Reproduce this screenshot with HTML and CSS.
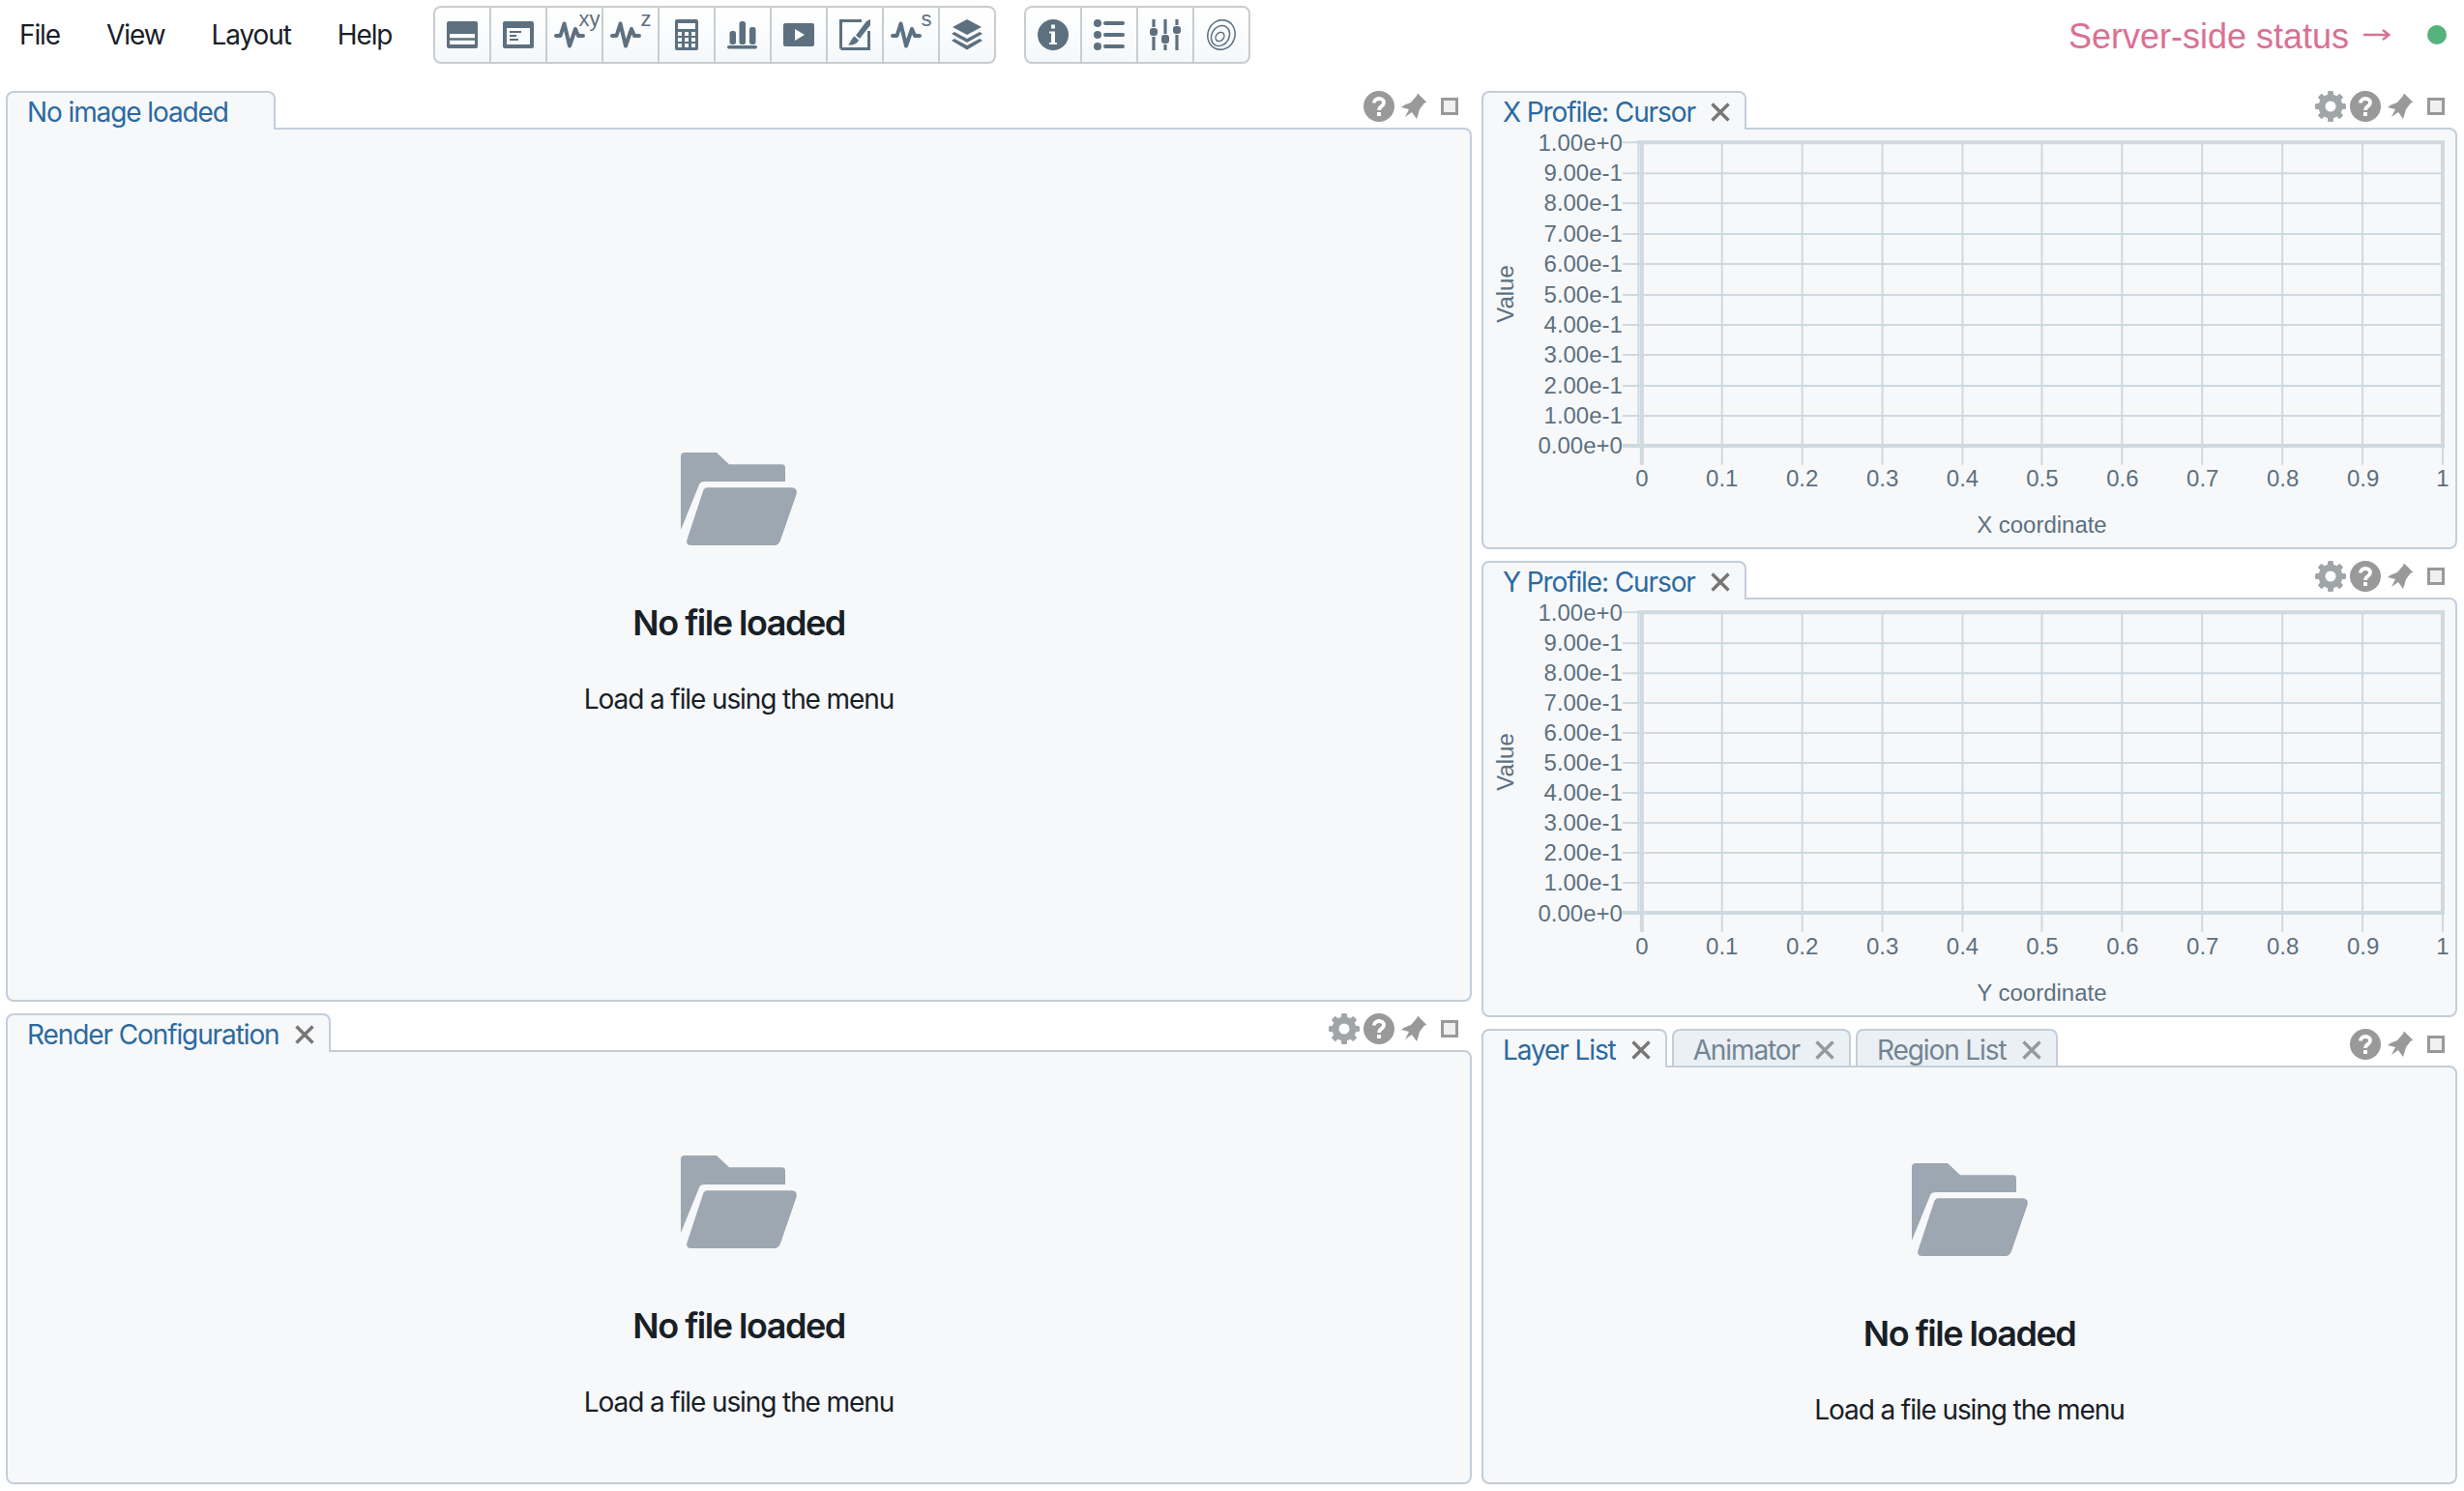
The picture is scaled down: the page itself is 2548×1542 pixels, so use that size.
FILE: index.html
```html
<!DOCTYPE html>
<html lang="en">
<head>
<meta charset="utf-8">
<title>CARTA</title>
<link rel="stylesheet" href="styles.css">
</head>
<body>
<svg class="defs" width="0" height="0" aria-hidden="true">
  <symbol id="folder" viewBox="0 0 120 96">
    <path d="M0 4Q0 0 4 0H37L50 12.3H104.6Q108 12.3 108 16V30H24.5Q21 30 19.5 32L0 80Z"/>
    <path d="M27 36.3H114Q121 36.3 119.6 43L103 91Q101 96 97 96H11Q5 96 6.5 90L23 40Q24.5 36.3 27 36.3Z"/>
  </symbol>
  <symbol id="gear" viewBox="0 0 32 32">
    <g>
      <rect x="13" y="0" width="6" height="7" rx="1.5"/>
      <rect x="13" y="0" width="6" height="7" rx="1.5" transform="rotate(45 16 16)"/>
      <rect x="13" y="0" width="6" height="7" rx="1.5" transform="rotate(90 16 16)"/>
      <rect x="13" y="0" width="6" height="7" rx="1.5" transform="rotate(135 16 16)"/>
      <rect x="13" y="0" width="6" height="7" rx="1.5" transform="rotate(180 16 16)"/>
      <rect x="13" y="0" width="6" height="7" rx="1.5" transform="rotate(225 16 16)"/>
      <rect x="13" y="0" width="6" height="7" rx="1.5" transform="rotate(270 16 16)"/>
      <rect x="13" y="0" width="6" height="7" rx="1.5" transform="rotate(315 16 16)"/>
    </g>
    <circle cx="16" cy="16" r="9" fill="none" stroke="currentColor" stroke-width="7"/>
  </symbol>
  <symbol id="help" viewBox="0 0 32 32">
    <circle cx="16" cy="16" r="16"/>
    <path d="M11 12.5C11 9.5 13.300 8 16 8s5 1.500 5 4.300c0 3.700-5 3.500-5 7.700" fill="none" stroke="#fff" stroke-width="3.800"/>
    <rect x="14" y="22" width="4" height="4" fill="#fff"/>
  </symbol>
  <symbol id="pin" viewBox="0 0 28 28">
    <path d="M18 .5L27.500 10 25 10.500 20 17 18 24 17 27 12 20 5 25 9 17 1 15 4.500 12.500 11 10 17 3Z"/>
  </symbol>
  <symbol id="close" viewBox="0 0 20 20">
    <path d="M1.500 1.500L18.500 18.500M18.500 1.500L1.500 18.500" fill="none" stroke="currentColor" stroke-width="3.400"/>
  </symbol>
  <symbol id="pulse" viewBox="0 0 32 28">
    <path d="M2 15H6.500L10.500 2.500 16 25.500 22 8 25 15H30" fill="none" stroke="currentColor" stroke-width="4" stroke-linecap="round" stroke-linejoin="round"/>
  </symbol>
</svg>

<div class="app">
  <header class="topbar">
    <nav class="menu">
      <span class="menu-item">File</span>
      <span class="menu-item">View</span>
      <span class="menu-item">Layout</span>
      <span class="menu-item">Help</span>
    </nav>
    <div class="btn-group first-group">
      <div class="tool"><svg class="ico" viewBox="0 0 32 32"><path fill-rule="evenodd" d="M2 2H30Q32 2 32 4V28Q32 30 30 30H2Q0 30 0 28V4Q0 2 2 2ZM3 15V19.300H29V15ZM3 21.700V26H29V21.700Z"/></svg></div>
      <div class="tool"><svg class="ico" viewBox="0 0 32 32"><path fill-rule="evenodd" d="M2 2H30Q32 2 32 4V28Q32 30 30 30H2Q0 30 0 28V4Q0 2 2 2ZM4 9V26H28V9ZM7 12H19V14H7ZM7 16H14V18H7ZM7 20H16V22H7Z"/></svg></div>
      <div class="tool"><svg class="ico ico-shift" viewBox="0 0 32 28"><use href="#pulse"/></svg><span class="sup sup-xy">xy</span></div>
      <div class="tool"><svg class="ico ico-shift" viewBox="0 0 32 28"><use href="#pulse"/></svg><span class="sup">z</span></div>
      <div class="tool"><svg class="ico" viewBox="0 0 32 32"><path fill-rule="evenodd" d="M6 0H26Q28 0 28 2V30Q28 32 26 32H6Q4 32 4 30V2Q4 0 6 0ZM7 4V10H25V4ZM7 13V17H11V13ZM14 13V17H18V13ZM21 13V17H25V13ZM7 19V23H11V19ZM14 19V23H18V19ZM21 19V23H25V19ZM7 25V29H11V25ZM14 25V29H18V25ZM21 25V29H25V25Z"/></svg></div>
      <div class="tool"><svg class="ico" viewBox="0 0 32 32"><rect x="2.500" y="12" width="6.500" height="14" rx="2.500"/><rect x="12.500" y="2" width="6.500" height="24" rx="2.500"/><rect x="23" y="8" width="6.500" height="18" rx="2.500"/><rect x="0" y="27" width="31" height="3.500" rx="1.700"/></svg></div>
      <div class="tool"><svg class="ico" viewBox="0 0 32 32"><path fill-rule="evenodd" d="M2 4H30Q32 4 32 6V26Q32 28 30 28H2Q0 28 0 26V6Q0 4 2 4ZM12 10V22L22 16Z"/></svg></div>
      <div class="tool"><svg class="ico" viewBox="0 0 32 32"><path d="M1.500 30.500V1.500H23M30.500 12V30.500H1.500" fill="none" stroke="currentColor" stroke-width="3"/><path d="M32 0V6L21 20 17 16.500 28 2Z"/><path d="M15.500 17.500L20 21.500C19 25 14 27 9 26.500 11.500 24.500 12 20 15.500 17.500Z"/></svg></div>
      <div class="tool"><svg class="ico ico-shift" viewBox="0 0 32 28"><use href="#pulse"/></svg><span class="sup">s</span></div>
      <div class="tool"><svg class="ico" viewBox="0 0 32 32"><path d="M16 0L31 8 16 16 1 8Z"/><path d="M3 13L16 20 29 13 32 15 16 24 0 15Z"/><path d="M3 20L16 27 29 20 32 22 16 31.500 0 22Z"/></svg></div>
    </div>
    <div class="btn-group">
      <div class="tool"><svg class="ico" viewBox="0 0 32 32"><path fill-rule="evenodd" d="M16 0A16 16 0 1 1 16 32 16 16 0 0 1 16 0ZM14 5.500V9.500H18V5.500ZM12 12.500V14.500H14V24H12V26H20V24H18V12.500Z"/></svg></div>
      <div class="tool"><svg class="ico" viewBox="0 0 32 32"><circle cx="4" cy="4" r="4"/><circle cx="4" cy="16" r="4"/><circle cx="4" cy="28" r="4"/><rect x="10" y="2" width="22" height="4" rx="2"/><rect x="10" y="14" width="22" height="4" rx="2"/><rect x="10" y="26" width="22" height="4" rx="2"/></svg></div>
      <div class="tool"><svg class="ico" viewBox="0 0 32 32"><path d="M4 0V8M4 18V32M16 0V15M16 26V32M28 0V6M28 16V32" fill="none" stroke="currentColor" stroke-width="3.200"/><rect x="0" y="9" width="8" height="8" rx="3"/><rect x="12" y="16" width="8" height="9" rx="3"/><rect x="24" y="7" width="8" height="8" rx="3"/></svg></div>
      <div class="tool"><svg class="ico" viewBox="0 0 32 32"><g fill="none" stroke="currentColor" stroke-width="1.500"><ellipse cx="16" cy="16" rx="14" ry="15.500" transform="rotate(20 16 16)"/><ellipse cx="15" cy="17" rx="9" ry="11" transform="rotate(30 15 17)"/><ellipse cx="14.500" cy="18" rx="4" ry="5" transform="rotate(40 14.500 18)"/></g></svg></div>
    </div>
    <div class="status">
      <span class="status-text">Server-side status</span>
      <svg class="status-arrow" viewBox="0 0 28 14" aria-hidden="true"><path d="M0 7H26M20 2L26.500 7 20 12" fill="none" stroke="currentColor" stroke-width="2.400"/></svg>
      <span class="status-dot"></span>
    </div>
  </header>

  <main class="workspace">
    <div class="column column-left">
      <section class="panel panel-image">
        <div class="panel-head">
          <div class="tab tab-wide">No image loaded</div>
          <div class="controls">
            <svg class="ctl ctl-help"><use href="#help"/></svg>
            <svg class="ctl ctl-pin"><use href="#pin"/></svg>
            <span class="ctl-max"></span>
          </div>
        </div>
        <div class="panel-body empty">
          <svg class="folder"><use href="#folder"/></svg>
          <h2 class="empty-title">No file loaded</h2>
          <p class="empty-text">Load a file using the menu</p>
        </div>
      </section>
      <section class="panel panel-render">
        <div class="panel-head">
          <div class="tab">Render Configuration<svg class="x"><use href="#close"/></svg></div>
          <div class="controls">
            <svg class="ctl ctl-gear"><use href="#gear"/></svg>
            <svg class="ctl ctl-help"><use href="#help"/></svg>
            <svg class="ctl ctl-pin"><use href="#pin"/></svg>
            <span class="ctl-max"></span>
          </div>
        </div>
        <div class="panel-body empty">
          <svg class="folder"><use href="#folder"/></svg>
          <h2 class="empty-title">No file loaded</h2>
          <p class="empty-text">Load a file using the menu</p>
        </div>
      </section>
    </div>

    <div class="column column-right">
      <section class="panel panel-x">
        <div class="panel-head">
          <div class="tab">X Profile: Cursor<svg class="x"><use href="#close"/></svg></div>
          <div class="controls">
            <svg class="ctl ctl-gear"><use href="#gear"/></svg>
            <svg class="ctl ctl-help"><use href="#help"/></svg>
            <svg class="ctl ctl-pin"><use href="#pin"/></svg>
            <span class="ctl-max"></span>
          </div>
        </div>
        <div class="panel-body">
          <svg class="chart" viewBox="0 0 1006 432">
            <path class="grid" d="M144 13H160M144 45H993M144 76H993M144 108H993M144 139H993M144 171H993M144 202H993M144 233H993M144 265H993M144 296H993M247 13V347M330 13V347M413 13V347M496 13V347M578 13V347M661 13V347M744 13V347M827 13V347M910 13V347M993 327V347M160.500 11V327"/>
            <path class="axis" d="M160 13H995M144 327H995M164 13V347M993 11V329"/>
            <g class="tick-y">
              <text x="144" y="22">1.00e+0</text><text x="144" y="53">9.00e-1</text><text x="144" y="84">8.00e-1</text><text x="144" y="116">7.00e-1</text><text x="144" y="147">6.00e-1</text><text x="144" y="179">5.00e-1</text><text x="144" y="210">4.00e-1</text><text x="144" y="241">3.00e-1</text><text x="144" y="273">2.00e-1</text><text x="144" y="304">1.00e-1</text><text x="144" y="335.500">0.00e+0</text>
            </g>
            <g class="tick-x">
              <text x="164" y="369">0</text><text x="247" y="369">0.1</text><text x="330" y="369">0.2</text><text x="413" y="369">0.3</text><text x="496" y="369">0.4</text><text x="578.500" y="369">0.5</text><text x="661.500" y="369">0.6</text><text x="744.500" y="369">0.7</text><text x="827.500" y="369">0.8</text><text x="910.500" y="369">0.9</text><text x="993" y="369">1</text>
            </g>
            <text class="axis-title" x="578" y="417">X coordinate</text>
            <text class="axis-title" transform="translate(31 170) rotate(-90)">Value</text>
          </svg>
        </div>
      </section>
      <section class="panel panel-y">
        <div class="panel-head">
          <div class="tab">Y Profile: Cursor<svg class="x"><use href="#close"/></svg></div>
          <div class="controls">
            <svg class="ctl ctl-gear"><use href="#gear"/></svg>
            <svg class="ctl ctl-help"><use href="#help"/></svg>
            <svg class="ctl ctl-pin"><use href="#pin"/></svg>
            <span class="ctl-max"></span>
          </div>
        </div>
        <div class="panel-body">
          <svg class="chart" viewBox="0 0 1006 430">
            <path class="grid" d="M144 13H160M144 45H993M144 76H993M144 107H993M144 138H993M144 169H993M144 200H993M144 231H993M144 262H993M144 293H993M247 13V344M330 13V344M413 13V344M496 13V344M578 13V344M661 13V344M744 13V344M827 13V344M910 13V344M993 324V344M160.500 11V324"/>
            <path class="axis" d="M160 13H995M144 324H995M164 13V344M993 11V326"/>
            <g class="tick-y">
              <text x="144" y="22">1.00e+0</text><text x="144" y="53">9.00e-1</text><text x="144" y="84">8.00e-1</text><text x="144" y="115">7.00e-1</text><text x="144" y="146">6.00e-1</text><text x="144" y="177">5.00e-1</text><text x="144" y="208">4.00e-1</text><text x="144" y="239">3.00e-1</text><text x="144" y="270">2.00e-1</text><text x="144" y="301">1.00e-1</text><text x="144" y="333">0.00e+0</text>
            </g>
            <g class="tick-x">
              <text x="164" y="367">0</text><text x="247" y="367">0.1</text><text x="330" y="367">0.2</text><text x="413" y="367">0.3</text><text x="496" y="367">0.4</text><text x="578.500" y="367">0.5</text><text x="661.500" y="367">0.6</text><text x="744.500" y="367">0.7</text><text x="827.500" y="367">0.8</text><text x="910.500" y="367">0.9</text><text x="993" y="367">1</text>
            </g>
            <text class="axis-title" x="578" y="415">Y coordinate</text>
            <text class="axis-title" transform="translate(31 168) rotate(-90)">Value</text>
          </svg>
        </div>
      </section>
      <section class="panel panel-layer">
        <div class="panel-head">
          <div class="tab">Layer List<svg class="x"><use href="#close"/></svg></div>
          <div class="tab tab-off">Animator<svg class="x"><use href="#close"/></svg></div>
          <div class="tab tab-off">Region List<svg class="x"><use href="#close"/></svg></div>
          <div class="controls">
            <svg class="ctl ctl-help"><use href="#help"/></svg>
            <svg class="ctl ctl-pin"><use href="#pin"/></svg>
            <span class="ctl-max"></span>
          </div>
        </div>
        <div class="panel-body empty">
          <svg class="folder"><use href="#folder"/></svg>
          <h2 class="empty-title">No file loaded</h2>
          <p class="empty-text">Load a file using the menu</p>
        </div>
      </section>
    </div>
  </main>
</div>
</body>
</html>
```
FILE: styles.css
```css
* { box-sizing: border-box; }
html, body { margin: 0; padding: 0; background: #fff; }
body { font-family: Inter, "Liberation Sans", sans-serif; color: #182026; overflow: hidden; }
.defs { position: absolute; }

.app { display: flex; flex-direction: column; width: 2548px; height: 1542px; }

/* top bar */
.topbar { display: flex; align-items: flex-start; height: 94px; padding: 6px 0 0 20px; flex: none; }
.menu { display: flex; gap: 48px; height: 60px; align-items: center; }
.menu-item { font-size: 28px; letter-spacing: -1.1px; line-height: 32px; color: #182026; }
.btn-group { display: flex; height: 60px; border: 2px solid #c8cdd0; border-radius: 8px; background: linear-gradient(#ffffff, #f5f8fa); color: #5c7080; }
.first-group { margin-left: 43px; margin-right: 29px; }
.tool { position: relative; display: flex; align-items: center; justify-content: center; width: 58px; border-right: 2px solid #c8cdd0; color: #5c7080; }
.tool:last-child { width: 56px; border-right: 0; }
.ico { width: 32px; height: 32px; fill: currentColor; display: block; }
.ico-shift { margin-right: 10px; height: 28px; }
.sup { position: absolute; left: 38px; top: 1px; font: 22px/22px "Liberation Sans", sans-serif; color: #5c7080; }
.sup-xy { left: 32px; }
.status { display: flex; align-items: center; margin-left: auto; height: 60px; padding-right: 18px; color: #db7093; }
.status-text { font: 36px/44px "Liberation Sans", sans-serif; padding-top: 3px; }
.status-arrow { display: block; width: 28px; height: 14px; margin-left: 15px; flex: none; }
.status-dot { width: 20px; height: 20px; border-radius: 50%; background: #54b27b; margin-left: 38px; }

/* layout */
.workspace { display: grid; grid-template-columns: 1516px 1009px; column-gap: 10px; padding-left: 6px; flex: 1; min-height: 0; }
.column { display: flex; flex-direction: column; }
.column-left { gap: 12px; }
.column-right { gap: 12px; }
.panel { display: flex; flex-direction: column; flex: none; }
.panel-image { height: 942px; }
.panel-render { height: 487px; }
.panel-x { height: 474px; }
.panel-y { height: 472px; }
.panel-layer { height: 471px; }

.panel-head { display: flex; height: 38px; flex: none; align-items: flex-start; }
.tab { position: relative; z-index: 1; display: flex; align-items: center; height: 40px; padding: 2px 15px 0 20px; background: #f7f8fa; border: 2px solid #c3ced9; border-bottom: 0; border-radius: 8px 8px 0 0; font-size: 28px; letter-spacing: -1.1px; line-height: 34px; color: #2b6aa0; white-space: nowrap; }
.tab-wide { width: 279px; }
.tab-off { height: 38px; margin-left: 5px; padding-top: 4px; background: #ebf0f4; color: #738494; }
.x { width: 20px; height: 20px; margin-left: 16px; color: #777; flex: none; }
.tab-off .x { color: #929aa0; }

.controls { display: flex; align-items: center; height: 32px; margin-left: auto; padding-right: 13px; }
.column-left .controls { padding-right: 14px; }
.ctl { display: block; fill: #999; }
.ctl-gear { width: 32px; height: 32px; margin-right: 4px; fill: #a0a5a8; color: #a0a5a8; }
.ctl-help { width: 32px; height: 32px; margin-right: 6px; }
.ctl-pin { width: 28px; height: 28px; margin-right: 14px; }
.ctl-max { display: block; width: 18px; height: 18px; border: 3px solid #999; background: #f0f0f0; }

.panel-body { flex: 1; min-height: 0; background: #f7f8fa; border: 2px solid #c3ced9; border-radius: 0 8px 8px 8px; }

/* empty state */
.empty { display: flex; flex-direction: column; align-items: center; justify-content: center; padding-top: 40px; }
.folder { display: block; width: 120px; height: 96px; fill: #9da7b1; flex: none; }
.empty-title { margin: 58px 0 0; font-size: 36px; line-height: 44px; font-weight: 600; letter-spacing: -1.5px; color: #182026; }
.empty-text { margin: 40px 0 0; font-size: 28px; letter-spacing: -1.1px; line-height: 34px; color: #182026; }

/* charts */
.chart { display: block; width: 100%; height: 100%; font: 24px "Liberation Sans", sans-serif; }
.grid { fill: none; stroke: #ced9e0; stroke-width: 2; }
.axis { fill: none; stroke: #ced9e0; stroke-width: 4; }
.tick-y text { text-anchor: end; fill: #5c7080; }
.tick-x text { text-anchor: middle; fill: #5c7080; }
.axis-title { text-anchor: middle; fill: #5c7080; }
```
